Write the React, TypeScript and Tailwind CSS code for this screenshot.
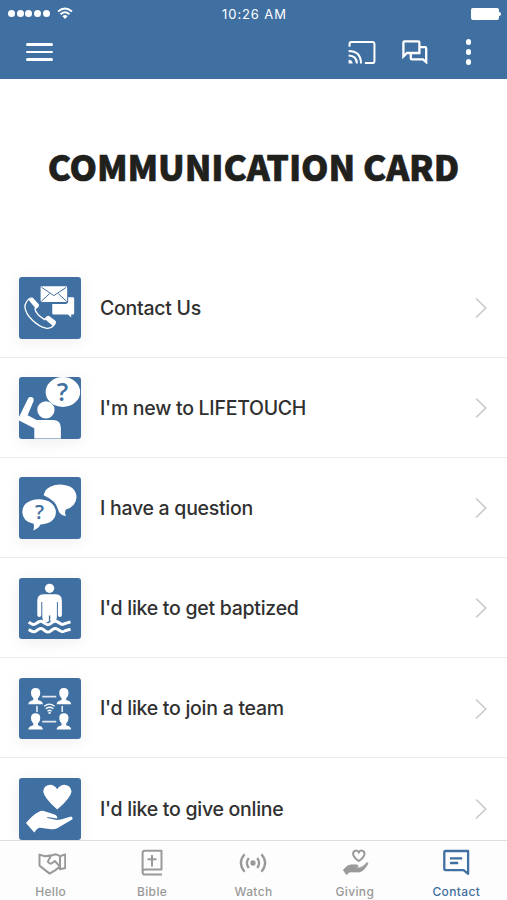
import type { ReactNode } from "react";

const ContactArt = () => (
    <>
        <path d="M100 76V109q0 4 4 4h43l10 9v-9h5q4 0 4-4V65q0-4-4-4h-14v13q0 7-7 7h-41z" />
        <rect x="65" y="28" width="80" height="47" rx="4" />
        <path d="M68 31L105 56L142 31M67 73L92 50M143 73L118 50" fill="none" stroke="#406fa2" strokeWidth="3" />
        <path
            d="M22 76q8-14 18-12L58 84q1 6-10 12q3 17 29 32q7-10 13-9l18 14q4 4-4 13q-9 11-23 8C53 148 20 116 18 91q-1-8 4-15z"
            fill="none"
            stroke="#fff"
            strokeWidth="4"
        />
        <path d="M29 69q7-7 14-4l16 18q1 6-9 12zM79 128q6-9 12-8l18 14q4 4-6 14z" />
    </>
);

const NewArt = () => (
    <>
        <ellipse cx="132" cy="45" rx="52" ry="45" />
        <text x="131" y="72" textAnchor="middle" fontFamily="Open Sans, sans-serif" fontWeight="600" fontSize="76" fill="#406fa2">
            ?
        </text>
        <circle cx="81" cy="99" r="26" />
        <path d="M28 63q5-5 12-2q6 4 4 11L26 115l27 14h49q24 0 24 24v32H46v-31L0 131v-11z" />
    </>
);

const QuestionArt = () => (
    <>
        <path d="M74 55q4-19 20-26q15-7 36-6q42 3 43 38q-1 27-32 37q-5 8 0 20q-20-5-23-19q-6-28-44-44z" />
        <path d="M59 67q23 0 38 11q14 11 14 28q-1 33-46 37q-8 14-23 18q5-9 2-20Q11 134 10 106q1-36 49-39z" />
        <text x="62" y="126" textAnchor="middle" fontFamily="Open Sans, sans-serif" fontWeight="600" fontSize="60" fill="#406fa2">
            ?
        </text>
    </>
);

const BaptismArt = () => (
    <>
        <circle cx="92" cy="31" r="14" />
        <path d="M73 49h38q18 0 18 20v42q0 6-6 6t-6-6V72h-3v44q0 16-13 18l-7-4v-17h-4v17l-7 4q-13-2-13-18V72h-3v39q0 6-6 6t-6-6V69q0-20 18-20z" />
        <path
            d="M29 133l7 4q9 6 17-1l6-4q7-4 14 1l7 5q7 5 14 0l8-6q7-4 14 0l8 5q7 5 14 0l17-5M29 155l7 4q9 6 17-1l6-4q7-4 14 1l7 5q7 5 14 0l8-6q7-4 14 0l8 5q7 5 14 0l17-5"
            fill="none"
            stroke="#fff"
            strokeWidth="9"
        />
    </>
);

const people = [
    [50, 30],
    [135, 30],
    [50, 106],
    [135, 106],
];

const TeamArt = () => (
    <>
        <path d="M70 56h42M70 131h42M54 84v18M130 84v18" stroke="#fff" strokeWidth="5" opacity="0.85" />
        {people.map(([x, y]) => (
            <g key={`${x}-${y}`} transform={`translate(${x} ${y})`}>
                <path d="M0 0q14 0 14 15q0 10-7 16v5q14 3 15 13H-22q1-10 15-13v-5q-7-6-7-16Q-14 0 0 0z" />
            </g>
        ))}
        <g fill="none" stroke="#fff" strokeWidth="4" strokeLinecap="round">
            <path d="M77 84q14-11 29 0M82 92q10-8 20 0M87 99q5-4 10 0" />
        </g>
        <circle cx="92" cy="105" r="3.5" />
    </>
);

const GiveArt = () => (
    <>
        <path d="M115 95Q76 60 73 41q1-19 20-21q14 0 22 14q8-14 22-14q19 2 21 21q-3 19-43 54z" />
        <path d="M21 135q22-26 38-33q8-5 18-2l28 9q12 4 10 13l-30-5v3l29 6q13 0 22-4l21-6q5 2 4 8l-46 27q-8 4-18 3l-34-4q-6 0-10 5l-7 9z" />
    </>
);

const rows: { title: string; art: ReactNode }[] = [
    { title: "Contact Us", art: <ContactArt /> },
    { title: "I'm new to LIFETOUCH", art: <NewArt /> },
    { title: "I have a question", art: <QuestionArt /> },
    { title: "I'd like to get baptized", art: <BaptismArt /> },
    { title: "I'd like to join a team", art: <TeamArt /> },
    { title: "I'd like to give online", art: <GiveArt /> },
];

const tabs: { name: string; icon: ReactNode }[] = [
    {
        name: "Hello",
        icon: (
            <path
                d="M15.5 7.2L9 8.2 3.5 6.6V17.6L13.6 25.6 19 22.4 24 18.6M24 8.2l5.2-1.8V20L24 21.2zM24 8.2L19.6 6.2 15 7.6 11.8 13.6Q13.6 16.6 16.4 14.8L18.8 13 24 18.6"
                strokeWidth="2"
            />
        ),
    },
    {
        name: "Bible",
        icon: <path d="M25 26.5H8.2a2.6 2.6 0 0 1-2.6-2.6V5q0-2.2 2.2-2.2H24.5V21.6H8q-2.4 0-2.4 2.4M15 7v11.5M10.5 11.2h9" strokeWidth="2" />,
    },
    {
        name: "Watch",
        icon: (
            <>
                <circle cx="15" cy="15" r="1.5" fill="currentColor" />
                <path d="M10.8 10q-3.8 5 0 10M19.2 10q3.8 5 0 10M6.6 6.3q-7.4 8.7 0 17.4M23.4 6.3q7.4 8.7 0 17.4" />
            </>
        ),
    },
    {
        name: "Giving",
        icon: (
            <>
                <path d="M18.8 13q-5.7-4-5.7-7.1c0-3.8 4.5-4.4 5.7-1.3c1.2-3.1 5.7-2.5 5.7 1.3q0 3.1-5.7 7.1z" strokeWidth="2" />
                <path
                    d="M3.2 22q4.3-5.3 8-5.2h5.5q2 .6 1.5 2.3l-4.2.7 4.4.2q4.4-.6 8.6-5.6 1.3.4.9 1.6-4.2 7-8.2 8.1H9.5l-3 2.6z"
                    fill="currentColor"
                    strokeWidth="0.6"
                />
            </>
        ),
    },
    {
        name: "Contact",
        icon: <path d="M3.3 4.2q0-1.2 1.2-1.2h22.6v22.8l-4.5-3.6H4.5q-1.2 0-1.2-1.2zM9 10.3h12.2M9 15h8.2" />,
    },
];

const Header = () => {
    return (
        <header className="h-[79px] shrink-0 bg-[#406fa2] text-white">
            <div className="grid h-[27px] grid-cols-3 items-center pr-1.5 pl-2">
                <div className="flex items-center gap-[7px]">
                    <div className="flex gap-[1.6px]">
                        {[1, 2, 3, 4, 5].map((dot) => (
                            <span key={dot} className="size-[7.1px] rounded-full bg-white" />
                        ))}
                    </div>
                    <svg width="16" height="13" viewBox="0 0 16 13" fill="none" stroke="currentColor" strokeWidth="1.9">
                        <path d="M1 4.5q7-6 14 0M3.5 7.3q4.5-4 9 0" />
                        <path d="M5.4 9.2q2.6-2.2 5.2 0L8 12z" fill="currentColor" stroke="none" />
                    </svg>
                </div>
                <span className="pt-0.5 text-center text-[13px] leading-none tracking-[0.9px] whitespace-nowrap">10:26 AM</span>
                <div className="flex items-center justify-end">
                    <span className="h-[12px] w-[28px] rounded-[2px] bg-white" />
                    <span className="h-[4px] w-[2px] rounded-r-full bg-white" />
                </div>
            </div>
            <div className="flex h-[50px] items-center pr-[36px] pl-[26px]">
                <div className="flex w-[27px] flex-col gap-[5px]">
                    <span className="h-[2.4px] rounded-full bg-white" />
                    <span className="h-[2.4px] rounded-full bg-white" />
                    <span className="h-[2.4px] rounded-full bg-white" />
                </div>
                <svg className="ml-auto" width="28" height="23" viewBox="0 0 28 24" fill="none" stroke="currentColor" strokeWidth="2.1">
                    <path d="M1 6V3q0-2 2-2h22q2 0 2 2v18q0 2-2 2h-8M0 10.5q12.7 0 13 13M0 15.2q8.4.2 8.7 8.3" />
                    <path d="M0 19.5q4 .3 4.2 4H0z" fill="currentColor" stroke="none" />
                </svg>
                <svg className="ml-[26px]" width="26" height="24" viewBox="0 0 26 24" fill="none" stroke="currentColor" strokeWidth="2.3">
                    <path d="M1.4 16.5V2.5q0-1.2 1.2-1.2h13.6q1.2 0 1.2 1.2V13H5zM18 7.2h5q1.2 0 1.2 1.2v13.8L21 19.4H10q-1.2 0-1.2-1.2V14" />
                </svg>
                <div className="ml-[38px] flex flex-col gap-[4.6px]">
                    <span className="size-[5.3px] rounded-full bg-white" />
                    <span className="size-[5.3px] rounded-full bg-white" />
                    <span className="size-[5.3px] rounded-full bg-white" />
                </div>
            </div>
        </header>
    );
};

export default function App() {
    return (
        <div className="flex h-[900px] w-full flex-col overflow-hidden bg-white font-['Inter',sans-serif]">
            <Header />

            <div className="flex h-[178.5px] shrink-0 items-center justify-center pb-[4.5px]">
                <h1 className="font-['Noto_Sans_CJK_SC',sans-serif] text-[35px] font-black tracking-[-0.12px] whitespace-nowrap text-[#20201d] [-webkit-text-stroke:0.6px_#20201d]">
                    COMMUNICATION CARD
                </h1>
            </div>

            <ul className="min-h-0 flex-1 overflow-hidden">
                {rows.map(({ title, art }) => (
                    <li key={title} className="flex h-[100.2px] items-center border-b border-[#ececec] pt-[1.5px] pr-[19px] pl-[19px]">
                        <svg
                            className="size-[61.5px] shrink-0 overflow-visible rounded-[3px] bg-[#406fa2] shadow-[0_3px_16px_rgba(0,0,0,0.07)]"
                            viewBox="0 0 185 185"
                            fill="#fff"
                        >
                            {art}
                        </svg>
                        <span className="ml-[19.5px] pt-px text-[19.5px] font-[450] tracking-[-0.27px] text-[#303030]">{title}</span>
                        <svg className="ml-auto" width="14" height="22" viewBox="0 0 14 22" fill="none" stroke="#c9c9c9" strokeWidth="1.6">
                            <path d="M2 1.5L11.8 11L2 20.5" />
                        </svg>
                    </li>
                ))}
            </ul>

            {/* bottom tabs */}
            <nav className="grid h-[60px] shrink-0 grid-cols-5 border-t border-[#dedede] bg-[#fdfdfd]">
                {tabs.map(({ name, icon }) => (
                    <a
                        key={name}
                        className={
                            name === "Contact"
                                ? "flex flex-col items-center pt-[7px] text-[#406fa2]"
                                : "flex flex-col items-center pt-[7px] text-[#999]"
                        }
                    >
                        <svg width="30" height="30" viewBox="0 0 30 30" fill="none" stroke="currentColor" strokeWidth="2.3" strokeLinejoin="round">
                            {icon}
                        </svg>
                        <span className="mt-[7px] text-[12px] leading-[14px] font-medium tracking-[0.35px]">{name}</span>
                    </a>
                ))}
            </nav>
        </div>
    );
}
